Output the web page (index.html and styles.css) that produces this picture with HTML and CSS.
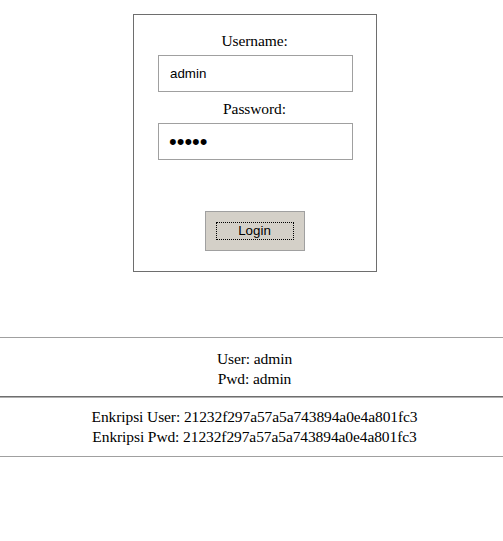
FILE: index.html
```html
<!DOCTYPE html>
<html>
<head>
<meta charset="utf-8">
<title>Login</title>
<link rel="stylesheet" href="styles.css">
</head>
<body>
<div class="page">
  <form class="login-box">
    <label class="label" for="user">Username:</label>
    <input class="field" id="user" type="text" value="admin">
    <label class="label label-pwd" for="pwd">Password:</label>
    <input class="field field-pwd" id="pwd" type="password" value="admin">
    <button class="btn" type="button"><span class="focus">Login</span></button>
  </form>
</div>
<hr class="rule rule-thin rule-first">
<div class="info">
  <div>User: admin</div>
  <div>Pwd: admin</div>
</div>
<hr class="rule rule-dark">
<div class="info info-enc">
  <div>Enkripsi User: 21232f297a57a5a743894a0e4a801fc3</div>
  <div>Enkripsi Pwd: 21232f297a57a5a743894a0e4a801fc3</div>
</div>
<hr class="rule rule-thin">
</body>
</html>
```
FILE: styles.css
```css
html, body {
  margin: 0;
  padding: 0;
  background: #ffffff;
  overflow: hidden;
}
body {
  font-family: "Liberation Serif", "Times New Roman", serif;
  font-size: 15.5px;
  letter-spacing: -0.1px;
  line-height: 20px;
  color: #000;
}
.page {
  display: flex;
  justify-content: center;
  padding-left: 6px;
  padding-top: 14px;
}
.login-box {
  width: 242px;
  height: 240px;
  border: 1px solid #6e6e6e;
  display: flex;
  flex-direction: column;
  align-items: center;
  padding-top: 16px;
  margin: 0;
}
.label {
  display: block;
  height: 20px;
  line-height: 20px;
  margin-bottom: 4px;
}
.label-pwd {
  margin-top: 7px;
}
.field {
  box-sizing: border-box;
  width: 195px;
  height: 37px;
  border: 1px solid #a0a0a0;
  padding: 0 0 0 11px;
  margin: 0 0 0 2px;
  font-family: "Liberation Sans", Arial, sans-serif;
  font-size: 13.33px;
  letter-spacing: 0;
  color: #000;
  background: #fff;
  outline: none;
}
.field-pwd {
  font-size: 22px;
  letter-spacing: 0;
  padding-left: 10px;
}
.btn {
  box-sizing: border-box;
  margin-top: 51px;
  width: 100px;
  height: 40px;
  background: #d4d0c8;
  border: 1px solid #a0a0a0;
  padding: 0;
  display: flex;
  align-items: center;
  justify-content: center;
  font-family: "Liberation Sans", Arial, sans-serif;
  font-size: 13.33px;
  letter-spacing: 0;
  color: #000;
}
.focus {
  box-sizing: border-box;
  width: 78px;
  height: 18px;
  border: 1px dotted #000;
  line-height: 15px;
  text-align: center;
}
.rule {
  border: 0;
  margin: 0;
  padding: 0;
  width: 100%;
}
.rule-thin {
  height: 1px;
  background: #a0a0a0;
}
.rule-first {
  margin-top: 65px;
}
.rule-dark {
  background: #6e6e6e;
  border-bottom: 1px solid #b0b0b0;
  height: 1px;
  margin-top: 7px;
}
.info {
  text-align: center;
  padding-left: 6px;
  margin-top: 11px;
}
.info-enc {
  margin-top: 9px;
  margin-bottom: 9px;
}
```
